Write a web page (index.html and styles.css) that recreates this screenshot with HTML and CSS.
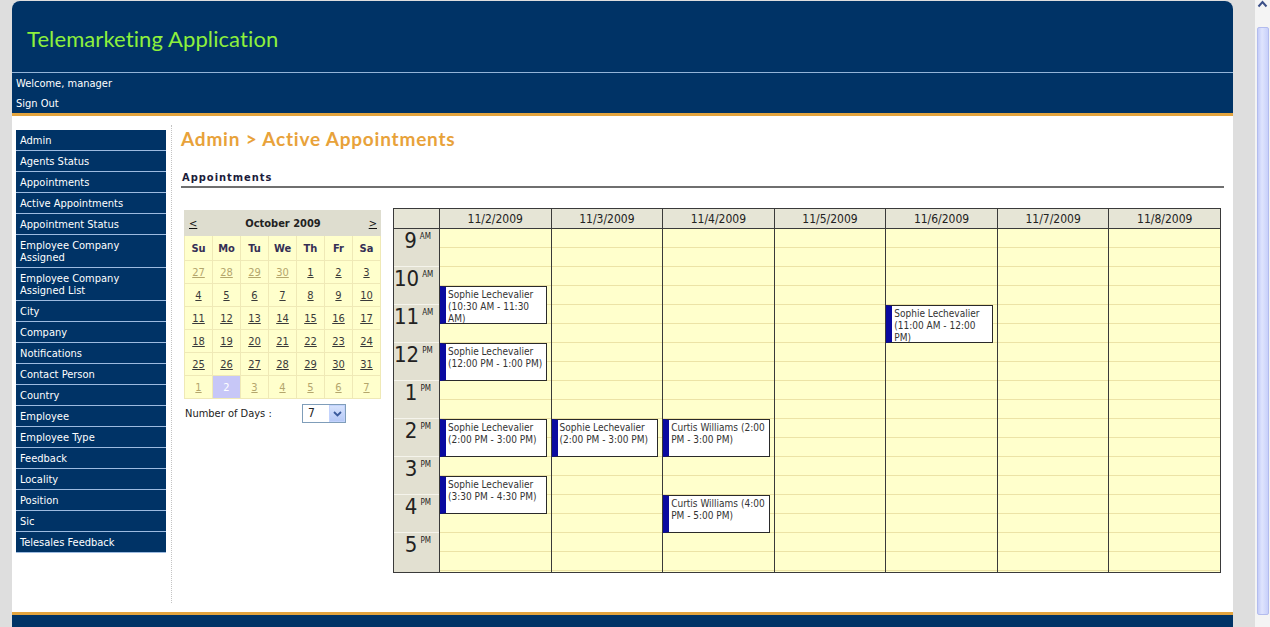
FILE: index.html
```html
<!DOCTYPE html>
<html>
<head>
<meta charset="utf-8">
<title>Telemarketing Application</title>
<link rel="stylesheet" href="styles.css">
</head>
<body>
<div class="gutter-left"></div>
<div class="page">
  <header class="header">
    <div class="brand"><h1 class="brand-title">Telemarketing Application</h1></div>
    <div class="userbar">
      <div class="userbar-line">Welcome, manager</div>
      <a class="userbar-line userbar-link" href="#">Sign Out</a>
    </div>
  </header>

  <div class="content">
    <nav class="sidebar">
      <ul class="menu">
        <li><a class="menu-link" href="#">Admin</a></li>
        <li><a class="menu-link" href="#">Agents Status</a></li>
        <li><a class="menu-link" href="#">Appointments</a></li>
        <li><a class="menu-link" href="#">Active Appointments</a></li>
        <li><a class="menu-link" href="#">Appointment Status</a></li>
        <li><a class="menu-link" href="#">Employee Company Assigned</a></li>
        <li><a class="menu-link" href="#">Employee Company Assigned List</a></li>
        <li><a class="menu-link" href="#">City</a></li>
        <li><a class="menu-link" href="#">Company</a></li>
        <li><a class="menu-link" href="#">Notifications</a></li>
        <li><a class="menu-link" href="#">Contact Person</a></li>
        <li><a class="menu-link" href="#">Country</a></li>
        <li><a class="menu-link" href="#">Employee</a></li>
        <li><a class="menu-link" href="#">Employee Type</a></li>
        <li><a class="menu-link" href="#">Feedback</a></li>
        <li><a class="menu-link" href="#">Locality</a></li>
        <li><a class="menu-link" href="#">Position</a></li>
        <li><a class="menu-link" href="#">Sic</a></li>
        <li><a class="menu-link" href="#">Telesales Feedback</a></li>
      </ul>
    </nav>

    <main class="main">
      <h2 class="page-title">Admin &gt; Active Appointments</h2>
      <h3 class="section-title">Appointments</h3>

      <div class="workspace">
        <div class="picker">
          <table class="cal">
            <tr class="cal-head">
              <th colspan="7">
                <div class="cal-nav"><a class="cal-arrow" href="#">&lt;</a><span>October 2009</span><a class="cal-arrow" href="#">&gt;</a></div>
              </th>
            </tr>
            <tr class="cal-dow">
              <th>Su</th><th>Mo</th><th>Tu</th><th>We</th><th>Th</th><th>Fr</th><th>Sa</th>
            </tr>
            <tr>
              <td class="other"><a href="#">27</a></td><td class="other"><a href="#">28</a></td><td class="other"><a href="#">29</a></td><td class="other"><a href="#">30</a></td><td><a href="#">1</a></td><td><a href="#">2</a></td><td><a href="#">3</a></td>
            </tr>
            <tr>
              <td><a href="#">4</a></td><td><a href="#">5</a></td><td><a href="#">6</a></td><td><a href="#">7</a></td><td><a href="#">8</a></td><td><a href="#">9</a></td><td><a href="#">10</a></td>
            </tr>
            <tr>
              <td><a href="#">11</a></td><td><a href="#">12</a></td><td><a href="#">13</a></td><td><a href="#">14</a></td><td><a href="#">15</a></td><td><a href="#">16</a></td><td><a href="#">17</a></td>
            </tr>
            <tr>
              <td><a href="#">18</a></td><td><a href="#">19</a></td><td><a href="#">20</a></td><td><a href="#">21</a></td><td><a href="#">22</a></td><td><a href="#">23</a></td><td><a href="#">24</a></td>
            </tr>
            <tr>
              <td><a href="#">25</a></td><td><a href="#">26</a></td><td><a href="#">27</a></td><td><a href="#">28</a></td><td><a href="#">29</a></td><td><a href="#">30</a></td><td><a href="#">31</a></td>
            </tr>
            <tr>
              <td class="other"><a href="#">1</a></td><td class="selected"><a href="#">2</a></td><td class="other"><a href="#">3</a></td><td class="other"><a href="#">4</a></td><td class="other"><a href="#">5</a></td><td class="other"><a href="#">6</a></td><td class="other"><a href="#">7</a></td>
            </tr>
          </table>
          <div class="days-row">
            <span class="days-label">Number of Days :</span>
            <div class="select">
              <span class="select-value">7</span>
              <span class="select-btn"><svg width="9" height="6" viewBox="0 0 9 6"><polyline points="1,1 4.5,4.5 8,1" fill="none" stroke="#3a5a9c" stroke-width="1.8"/></svg></span>
            </div>
          </div>
        </div>

        <div class="sched">
          <div class="sched-head">
            <div class="sched-corner"></div>
            <div class="sched-date">11/2/2009</div>
            <div class="sched-date">11/3/2009</div>
            <div class="sched-date">11/4/2009</div>
            <div class="sched-date">11/5/2009</div>
            <div class="sched-date">11/6/2009</div>
            <div class="sched-date">11/7/2009</div>
            <div class="sched-date">11/8/2009</div>
          </div>
          <div class="sched-body">
            <div class="times">
              <div class="time"><span class="time-num">9</span><span class="time-ap">AM</span></div>
              <div class="time"><span class="time-num">10</span><span class="time-ap">AM</span></div>
              <div class="time"><span class="time-num">11</span><span class="time-ap">AM</span></div>
              <div class="time"><span class="time-num">12</span><span class="time-ap">PM</span></div>
              <div class="time"><span class="time-num">1</span><span class="time-ap">PM</span></div>
              <div class="time"><span class="time-num">2</span><span class="time-ap">PM</span></div>
              <div class="time"><span class="time-num">3</span><span class="time-ap">PM</span></div>
              <div class="time"><span class="time-num">4</span><span class="time-ap">PM</span></div>
              <div class="time"><span class="time-num">5</span><span class="time-ap">PM</span></div>
            </div>
            <div class="day">
              <div class="appt" style="top:57px;height:38px">Sophie Lechevalier (10:30 AM - 11:30 AM)</div>
              <div class="appt" style="top:114px;height:38px">Sophie Lechevalier (12:00 PM - 1:00 PM)</div>
              <div class="appt" style="top:190px;height:38px">Sophie Lechevalier (2:00 PM - 3:00 PM)</div>
              <div class="appt" style="top:247px;height:38px">Sophie Lechevalier (3:30 PM - 4:30 PM)</div>
            </div>
            <div class="day">
              <div class="appt" style="top:190px;height:38px">Sophie Lechevalier (2:00 PM - 3:00 PM)</div>
            </div>
            <div class="day">
              <div class="appt" style="top:190px;height:38px">Curtis Williams (2:00 PM - 3:00 PM)</div>
              <div class="appt" style="top:266px;height:38px">Curtis Williams (4:00 PM - 5:00 PM)</div>
            </div>
            <div class="day"></div>
            <div class="day">
              <div class="appt" style="top:76px;height:38px">Sophie Lechevalier (11:00 AM - 12:00 PM)</div>
            </div>
            <div class="day"></div>
            <div class="day"></div>
          </div>
        </div>
      </div>
    </main>
  </div>

  <footer class="footer"></footer>
</div>
<div class="gutter-right"></div>
<div class="scrollbar">
  <div class="scroll-up"><svg width="11" height="8" viewBox="0 0 11 8"><polyline points="1.5,6.5 5.5,2 9.5,6.5" fill="none" stroke="#3c5088" stroke-width="2"/></svg></div>
  <div class="scroll-track"><div class="scroll-thumb"></div></div>
</div>
</body>
</html>
```

FILE: styles.css
```css
:root {
  --ui: "DejaVu Sans Condensed", "DejaVu Sans", sans-serif;
  --title: Lato, "Open Sans", sans-serif;
  --navy: #003366;
  --gold: #e3a43e;
  --orange: #e8a23a;
}

* { box-sizing: border-box; }

html, body {
  margin: 0;
  padding: 0;
  height: 627px;
  overflow: hidden;
}

body {
  display: flex;
  align-items: flex-start;
  background: #dedede;
  font-family: var(--ui);
  font-size: 11px;
  color: #222;
}

.gutter-left { width: 12px; flex: none; }
.gutter-right { flex: 1; }

.page {
  width: 1221px;
  flex: none;
  margin-top: 1px;
  background: #fff;
  border-radius: 8px 8px 0 0;
  display: flex;
  flex-direction: column;
}

/* Header */
.header {
  flex: none;
  background: var(--navy);
  border-radius: 8px 8px 0 0;
  border-bottom: 3px solid var(--gold);
}

.brand {
  height: 72px;
  padding: 4px 0 0 15px;
  display: flex;
  align-items: center;
  border-bottom: 1px solid #93b4d8;
}

.brand-title {
  margin: 0;
  font: 400 22px/1 var(--title);
  color: #8ef03c;
  letter-spacing: 0.1px;
}

.userbar {
  height: 40px;
  padding: 1px 4px 0;
}

.userbar-line {
  display: block;
  line-height: 20px;
  color: #fff;
  font-size: 11px;
  text-decoration: none;
}

/* Content */
.content {
  flex: none;
  display: flex;
  height: 496px;
}

.sidebar {
  width: 160px;
  flex: none;
  margin: 9px 0;
  padding: 5px 0 0 4px;
  border-right: 1px dotted #c4c4c4;
}

.menu {
  list-style: none;
  margin: 0;
  padding: 0;
  width: 150px;
}

.menu-link {
  display: block;
  padding: 5px 4px 3px;
  line-height: 12px;
  background: var(--navy);
  color: #fff;
  font-size: 11px;
  text-decoration: none;
  border-bottom: 1px solid #9dbbe0;
}

.main {
  flex: 1;
  padding: 12px 9px 0 9px;
}

.page-title {
  margin: 0;
  font: 700 19px/22px var(--title);
  color: var(--orange);
  letter-spacing: 0.8px;
}

.section-title {
  margin: 21px 0 0;
  padding: 0 1px 1px;
  font: 700 11px/14px var(--ui);
  letter-spacing: 1px;
  color: #1b1b3b;
  border-bottom: 2px solid #6f6f6f;
}

.workspace {
  display: flex;
  align-items: flex-start;
  gap: 12px;
  padding: 20px 3px 0;
}

/* Date picker */
.picker {
  width: 197px;
  flex: none;
  margin-top: 2px;
}

.cal {
  width: 197px;
  border-collapse: collapse;
  table-layout: fixed;
  border: 1px solid #6b6b6b;
  background: #ffffcc;
}

.cal th, .cal td {
  height: 23px;
  padding: 0;
  text-align: center;
  border: 1px solid #efe9b6;
  font-size: 11px;
}

.cal-head th {
  height: 25px;
  background: #deddcf;
  border-color: #deddcf;
  font-weight: 700;
  color: #222;
}

.cal-nav {
  display: flex;
  justify-content: space-between;
  align-items: center;
  padding: 0 3px 0 4px;
  font-size: 11px;
}

.cal-arrow {
  color: #111;
  font-weight: 400;
  text-decoration: underline;
}

.cal-dow th {
  font-weight: 700;
  color: #352f55;
  height: 25px;
}

.cal td a {
  color: #3a3a3a;
  text-decoration: underline;
}

.cal td.other a { color: #b4a66c; }

.cal td.selected {
  background: #c7c7f7;
}

.cal td.selected a {
  color: #fff;
  text-decoration: none;
}

.days-row {
  display: grid;
  grid-template-columns: 118px 44px;
  align-items: center;
  margin-top: 5px;
  height: 19px;
}

.days-label {
  padding-left: 1px;
  color: #222;
}

.select {
  height: 19px;
  border: 1px solid #7f9db9;
  background: #fff;
  display: flex;
  justify-content: space-between;
}

.select-value {
  padding-left: 5px;
  font-size: 12px;
  line-height: 17px;
}

.select-btn {
  width: 16px;
  background: linear-gradient(#d6e2fd, #b6c9f6);
  border: 1px solid #c3d3fd;
  display: flex;
  align-items: center;
  justify-content: center;
}

/* Scheduler */
.sched {
  flex: 1;
  border: 1px solid #3a3a3a;
  background: #ffffcc;
}

.sched-head, .sched-body {
  display: grid;
  grid-template-columns: 45px repeat(7, 1fr);
}

.sched-head {
  height: 20px;
  background: #e6e5d6;
  border-bottom: 1px solid #3a3a3a;
}

.sched-date {
  border-left: 1px solid #3a3a3a;
  text-align: center;
  padding-top: 1px;
  line-height: 18px;
  font-size: 12px;
  color: #222;
}

.sched-body { height: 343px; }

.times { background: #e2e0d1; }

.time {
  height: 38px;
  padding-right: 8px;
  text-align: right;
  border-bottom: 1px solid #f5f4ec;
  color: #222;
}

.time:last-child { border-bottom: 0; }

.time-num {
  font-size: 22px;
  line-height: 24px;
}

.time-ap {
  font-size: 8px;
  vertical-align: top;
  line-height: 16px;
  margin-left: 3px;
}

.day {
  position: relative;
  border-left: 1px solid #3a3a3a;
  background: repeating-linear-gradient(to bottom, #ffffcc 0, #ffffcc 18px, #ece3a6 18px, #ece3a6 19px);
}

.appt {
  position: absolute;
  left: 0;
  width: calc(100% - 4px);
  overflow: hidden;
  background: #fff;
  border: 1px solid #2a2a2a;
  border-left: 6px solid #0a0aa0;
  padding: 2px 1px 0 2px;
  font-size: 10px;
  line-height: 12px;
  color: #333;
}

/* Footer */
.footer {
  flex: none;
  height: 20px;
  background: var(--navy);
  border-top: 3px solid var(--gold);
}

/* Scrollbar */
.scrollbar {
  width: 15px;
  height: 627px;
  flex: none;
  background: #f4f4f4;
  display: flex;
  flex-direction: column;
}

.scroll-up {
  height: 10px;
  display: flex;
  justify-content: center;
  align-items: flex-start;
}

.scroll-track {
  flex: 1;
  padding: 17px 1px 12px 2px;
  display: flex;
}

.scroll-thumb {
  flex: 1;
  background: linear-gradient(to right, #c4ccf8, #dfe4fd 40%, #c8d0fa);
  border: 1px solid #b3bcee;
  border-radius: 2px;
}
```
